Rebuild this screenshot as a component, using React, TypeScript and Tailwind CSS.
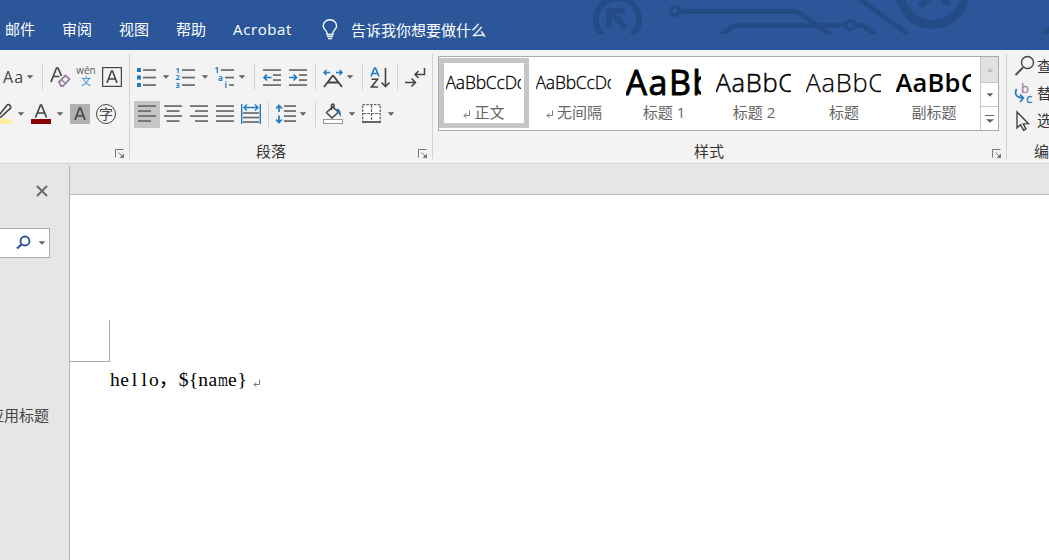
import React from 'react';
import clsx from 'clsx';

const INK = '#444444';
const LINE = '#6a6a6a';
const BLUE = '#1e7bc4';

interface IconProps {
  className?: string;
  children: React.ReactNode;
  w?: number;
  h?: number;
}

// All ribbon icons share a 20px high box
const Icon = ({ className, children, w = 20, h = 20 }: IconProps) => (
  <svg width={w} height={h} viewBox={`0 0 ${w} ${h}`} fill="none" className={clsx('shrink-0 overflow-visible', className)}>
    {children}
  </svg>
);

const Caret = ({ className }: { className?: string }) => (
  <Icon w={6} h={4} className={className}>
    <path d="M-0.300 0.200h6.600L3 3.700z" fill="#606060" />
  </Icon>
);

const Separator = ({ className }: { className?: string }) => (
  <div className={clsx('h-[26px] w-px shrink-0 bg-[#d2d2d2]', className)} />
);

const GroupDivider = () => <div className="mt-1 h-[105px] w-px shrink-0 bg-[#d2d2d2]" />;

const Launcher = ({ className }: { className?: string }) => (
  <Icon w={10} h={10} className={className}>
    <path d="M0.500 8.500v-8h8" stroke="#777777" />
    <path d="M3.500 3.500l4 4" stroke="#777777" />
    <path d="M9 4.500V9H4.500z" fill="#777777" />
  </Icon>
);

const Lines = ({ rows }: { rows: number[][] }) => (
  <>
    {rows.map(([x, y, w]) => (
      <rect key={`${x}-${y}`} x={x} y={y - 0.8} width={w} height={1.7} fill={LINE} />
    ))}
  </>
);

const tabs = ['邮件', '审阅', '视图', '帮助', 'Acrobat'];

const TitleBar = () => (
  <header className="relative h-[50px] bg-[#2b579a] text-[15px] text-white">
    <svg className="absolute top-0 left-[580px]" width="469" height="34" viewBox="0 0 469 34" fill="none" stroke="#254b86">
      <circle cx="37.500" cy="19.500" r="21.500" strokeWidth="6" />
      <path d="M45 10.500H29V28M29 10.500L46 28" strokeWidth="5.500" />
      <circle cx="95" cy="11" r="4.300" strokeWidth="3.800" />
      <path d="M101 11.500H214Q218 11.500 222 14.500L250 35" strokeWidth="5" />
      <path d="M141 35L149 29Q153 25.300 159 25.300H264M276 25.300Q282 25 287 28.500L296 35" strokeWidth="5" />
      <circle cx="270" cy="25" r="4.300" strokeWidth="3.800" />
      <path d="M277 -3L329 35" strokeWidth="5" />
      <circle cx="352.500" cy="-8" r="32.500" strokeWidth="9" />
      <path d="M359 -12L340 6" strokeWidth="7" />
      <path d="M362 0h8.500v5.500H362z" fill="#254b86" stroke="none" />
      <path d="M463 35L471 28" strokeWidth="5" />
    </svg>
    <nav className="relative flex h-full items-center pt-[9px] pl-[5px] whitespace-nowrap">
      <div className="flex w-[290px] gap-[27px]">
        {tabs.map((tab) => (
          <span key={tab} className={tab === 'Acrobat' ? 'tracking-[0.600px]' : undefined}>{tab}</span>
        ))}
      </div>
      <Icon w={16} h={21} className="ml-[27px]">
        <path d="M5 15.500V14C5 11.500 1.200 10.500 1.200 7a6.700 6.300 0 0 1 13.400 0c0 3.500-3.700 4.500-3.700 7v1.500z" stroke="#fff" strokeWidth="1.400" />
        <path d="M5 17.500h6M6 19.700h4" stroke="#fff" strokeWidth="1.300" />
      </Icon>
      <span className="mt-px ml-[13px]">告诉我你想要做什么</span>
    </nav>
  </header>
);

const FontGroup = () => (
  <div className="flex w-[129px] shrink-0 flex-col overflow-hidden">
    <div className="mt-[12px] flex h-[30px] items-center">
      <span className="ml-[3px] w-[22px] font-['Open_Sans'] text-[16px] leading-none tracking-[1.200px] text-[#444444]">Aa</span>
      <Caret className="ml-[2px]" />
      <Separator className="ml-[9px]" />
      <Icon className="ml-[7px]">
        <path d="M1 15L6.500 1h1.500l3.500 8M3.500 9.500h6" stroke={INK} strokeWidth="1.700" />
        <path d="M9 15l6.500-6.500 4 3.500-6.500 7h-2z" stroke="#9b7fa3" strokeWidth="1.800" />
        <path d="M11 12.500l4.500 4" stroke="#9b7fa3" strokeWidth="1.500" />
      </Icon>
      <div className="ml-[7px] flex w-[18px] flex-col items-center">
        <span className="-mt-[2px] font-['Open_Sans'] text-[10px] leading-[10px] text-[#555555]">wén</span>
        <span className="text-[10px] leading-[12px] text-[#2b88d8]">文</span>
      </div>
      <Icon className="ml-[7px]">
        <rect x="0.600" y="0.600" width="18.800" height="18.800" stroke={INK} strokeWidth="1.200" />
        <path d="M5 16L9.500 4h1L15 16M6.500 12h7" stroke={INK} strokeWidth="1.600" />
      </Icon>
    </div>
    <div className="mt-[7px] flex h-[30px] items-center">
      <Icon w={12}>
        <path d="M-2 12.500L6 2.500Q8-1 10 1.500T8.500 6L1 13l-4 1" stroke={INK} strokeWidth="1.600" />
        <rect x="-6" y="15" width="18" height="5" fill="#ffef9c" />
      </Icon>
      <Caret className="ml-[6px]" />
      <Icon className="ml-[7px]">
        <path d="M4.500 13.500L9.500 1h1L15.500 13.500M6.500 9h7" stroke={INK} strokeWidth="1.700" />
        <rect y="15" width="20" height="5" fill="#8b0000" />
      </Icon>
      <Caret className="ml-[6px]" />
      <Icon className="ml-[7px]">
        <rect width="20" height="20" fill="#b1b1b1" />
        <path d="M5 16L9.500 4h1L15 16M6.500 12h7" stroke={INK} strokeWidth="1.700" />
      </Icon>
      <div className="ml-[6px] flex size-[20px] items-center justify-center rounded-full border-[1.500px] border-[#444444] text-[14px] leading-none text-[#444444]">字</div>
    </div>
    <Launcher className="mt-[20px] ml-[115px]" />
  </div>
);

const IndentIcon = ({ className, arrow }: { className?: string; arrow: string }) => (
  <Icon className={className} w={18}>
    <Lines rows={[[0, 3, 18], [10, 8, 8], [10, 13, 8], [0, 18, 18]]} />
    <path d={arrow} stroke={BLUE} strokeWidth="1.700" />
  </Icon>
);

const alignments = [
  [[0, 2, 18], [0, 7, 13], [0, 12, 18], [0, 17, 13]],
  [[0, 2, 18], [2.5, 7, 13], [0, 12, 18], [2.5, 17, 13]],
  [[0, 2, 18], [5, 7, 13], [0, 12, 18], [5, 17, 13]],
  [[0, 2, 18], [0, 7, 18], [0, 12, 18], [0, 17, 18]],
];

const ParagraphGroup = () => (
  <div className="flex w-[302px] shrink-0 flex-col">
    <div className="mt-[12px] flex h-[30px] items-center">
      <Icon className="ml-[7px]">
        {[1, 8.5, 16].map((y) => (
          <rect key={y} x="0" y={y} width="4" height="4" fill={BLUE} />
        ))}
        <Lines rows={[[6, 3, 13], [6, 10.5, 13], [6, 18, 13]]} />
      </Icon>
      <Caret className="ml-[6px]" />
      <Icon className="ml-[7px]">
        <g fill={BLUE} fontFamily="Open Sans" fontWeight="700" fontSize="7.500">
          <text x="-0.500" y="5.500">1</text>
          <text x="-0.500" y="13">2</text>
          <text x="-0.500" y="20.700">3</text>
        </g>
        <Lines rows={[[6, 3, 13], [6, 10.5, 13], [6, 18, 13]]} />
      </Icon>
      <Caret className="ml-[6px]" />
      <Icon className="ml-[7px]">
        <g fill={BLUE} fontFamily="Open Sans" fontWeight="700" fontSize="8">
          <text x="-0.500" y="5.500">1</text>
          <text x="3" y="13.500">a</text>
          <text x="9.500" y="21">i</text>
        </g>
        <Lines rows={[[6, 3, 13], [10, 10.5, 9], [14, 18, 5]]} />
      </Icon>
      <Caret className="ml-[4px]" />
      <Separator className="ml-[9px]" />
      <IndentIcon className="ml-[8px]" arrow="M8.500 10.500H1M4 7.500l-3 3 3 3" />
      <IndentIcon className="ml-[8px]" arrow="M0 10.500h7.500M4.500 7.500l3 3-3 3" />
      <Separator className="ml-[8px]" />
      <Icon className="ml-[7px]">
        <path d="M7 5.500H1M3.500 3L1 5.500 3.500 8M13 5.500h6M16.500 3L19 5.500 16.500 8" stroke={BLUE} strokeWidth="1.500" />
        <path d="M1 20l8.500-11h1L19 20M5 15.500h10" stroke={INK} strokeWidth="1.800" />
      </Icon>
      <Caret className="ml-[4px]" />
      <Separator className="ml-[9px]" />
      <Icon className="ml-[7px]">
        <path d="M1 9.500L4.500 1h1L9 9.500M2.500 6.500h5" stroke={BLUE} strokeWidth="1.600" />
        <path d="M1.500 12.300h6L1.500 20h6.500" stroke={INK} strokeWidth="1.600" />
        <path d="M15.500 1v18.500M11.500 15.500l4 4 4-4" stroke={INK} strokeWidth="1.600" />
      </Icon>
      <Separator className="ml-[7px]" />
      <Icon className="ml-[7px]">
        <path d="M19.500 1v6.500H10M13.500 4L10 7.500l3.500 3.500M0 15.500h10M6.500 11.500l4 4-4 4" stroke={INK} strokeWidth="1.500" />
      </Icon>
    </div>
    <div className="mt-[7px] flex h-[30px] items-center">
      <div className="ml-1 flex items-center">
        {alignments.map((rows, i) => (
          <div key={i} className={clsx('flex h-[27px] w-[26px] items-center justify-center', i === 0 && 'bg-[#c5c5c5]')}>
            <Icon w={18}>
              <Lines rows={rows} />
            </Icon>
          </div>
        ))}
      </div>
      <Icon className="ml-[3px]">
        <path d="M0.700 0v20M19.300 0v20M3 3.500h14M6 0.500l-3 3 3 3M14 0.500l3 3-3 3" stroke={BLUE} strokeWidth="1.400" />
        <Lines rows={[[2, 9, 16], [2, 13.5, 16], [2, 18, 16]]} />
      </Icon>
      <Separator className="ml-[7px]" />
      <Icon className="ml-[6px]" w={21}>
        <path d="M4 2v6M1 4.500l3-3 3 3M4 11.500v7M1 15.500l3 3 3-3" stroke={BLUE} strokeWidth="1.700" />
        <Lines rows={[[9, 2, 12], [9, 7, 12], [9, 12, 12], [9, 17, 12]]} />
      </Icon>
      <Caret className="ml-[4px]" />
      <Separator className="ml-[9px]" />
      <Icon className="ml-[7px]">
        <path d="M3.500 8.500l6-5.500 6 5-6.500 6zM8.500 6V1q2-2 2.500 0v3.500" stroke={INK} strokeWidth="1.500" />
        <path d="M13.500 4.500q5 0 4.500 8.500-2-2-2.500-4z" fill={BLUE} />
        <rect x="0.500" y="15.500" width="19" height="4" fill="#fff" stroke="#999999" />
      </Icon>
      <Caret className="ml-[6px]" />
      <Icon className="ml-[7px]" w={19}>
        <rect x="0.700" y="0.700" width="17.500" height="17.500" fill="#fff" stroke="#666666" strokeWidth="1.300" strokeDasharray="2.500 1.200" />
        <path d="M9.500 1v17M1 9.500h17" stroke="#666666" strokeWidth="1.200" strokeDasharray="3 1" />
        <path d="M0 18h19" stroke="#666666" strokeWidth="2" />
      </Icon>
      <Caret className="ml-[7px]" />
    </div>
    <div className="mt-[11px] flex items-center">
      <span className="ml-[126px] w-[30px] text-[15px] leading-[22px] text-[#333333]">段落</span>
      <Launcher className="mt-[6px] ml-[132px]" />
    </div>
  </div>
);

interface StyleItem {
  sample: string;
  label: string;
  mark?: boolean;
  sampleClass: string;
}

const styleItems: StyleItem[] = [
  { sample: 'AaBbCcDd', label: '正文', mark: true, sampleClass: 'text-[17.500px] font-light tracking-[-0.200px] [-webkit-text-stroke:0.300px_#000]' },
  { sample: 'AaBbCcDd', label: '无间隔', mark: true, sampleClass: 'text-[17.500px] font-light tracking-[-0.200px] [-webkit-text-stroke:0.300px_#000]' },
  { sample: 'AaBb', label: '标题 1', sampleClass: 'text-[34px] font-normal tracking-[1.500px] [-webkit-text-stroke:0.900px_#000]' },
  { sample: 'AaBbC', label: '标题 2', sampleClass: 'text-[25.500px] font-light tracking-[0.700px] [-webkit-text-stroke:0.500px_#000]' },
  { sample: 'AaBbC', label: '标题', sampleClass: 'text-[25.500px] font-light tracking-[0.700px] [-webkit-text-stroke:0.250px_#000]' },
  { sample: 'AaBbC', label: '副标题', sampleClass: 'text-[25.500px] font-semibold tracking-[0.200px]' },
];

const ReturnMark = ({ className }: { className?: string }) => (
  <Icon w={7} h={8} className={className}>
    <path d="M6.500 0.500v5H1M3.500 3L1 5.500 3.500 8" stroke="#777777" />
  </Icon>
);

const StylesGroup = () => (
  <div className="flex w-[573px] shrink-0 flex-col">
    <div className="mt-[6px] ml-[5px] flex h-[75px] w-[561px] border border-[#ababab] bg-white">
      {styleItems.map((item, i) => (
        <div
          key={item.label}
          className={clsx('mt-px flex h-[70px] w-[90px] shrink-0 flex-col items-center border-[5px]', i === 0 ? 'border-[#c6c6c6]' : 'border-transparent')}
        >
          <div className={clsx("mr-[2px] h-[38px] w-[75px] overflow-hidden font-['Open_Sans'] leading-[38px] whitespace-nowrap text-black", item.sampleClass)}>
            {item.sample}
          </div>
          <div className="flex items-center gap-[4px] text-[15px] leading-[22px] whitespace-nowrap text-[#666666]">
            {item.mark && <ReturnMark className="mt-[4px]" />}
            <span>{item.label}</span>
          </div>
        </div>
      ))}
      <div className="ml-px flex w-[18px] flex-col border-l border-[#c6c6c6]">
        <div className="flex h-[25px] items-center justify-center bg-[#e1e1e1]">
          <Caret className="rotate-180 opacity-30" />
        </div>
        <div className="flex h-[25px] items-center justify-center border-y border-[#c6c6c6]">
          <Caret />
        </div>
        <div className="flex flex-1 flex-col items-center justify-center gap-[3px]">
          <div className="h-px w-[9px] bg-[#666666]" />
          <Caret className="scale-x-125" />
        </div>
      </div>
    </div>
    <div className="mt-[9px] flex items-center">
      <span className="ml-[261px] w-[30px] text-[15px] leading-[22px] text-[#333333]">样式</span>
      <Launcher className="mt-[6px] ml-[268px]" />
    </div>
  </div>
);

const EditGroup = () => (
  <div className="flex w-[42px] shrink-0 flex-col overflow-hidden text-[15px] leading-[27px] whitespace-nowrap text-[#333333]">
    <div className="mt-[3px] flex h-[27px] items-center gap-[2px] pl-[8px]">
      <Icon className="-mt-[2px]">
        <circle cx="12.500" cy="6.500" r="6" stroke={INK} strokeWidth="1.400" />
        <path d="M8 11.500L0.500 19" stroke={INK} strokeWidth="1.800" />
      </Icon>
      <span>查找</span>
    </div>
    <div className="flex h-[27px] items-center gap-[3px] pl-[7px]">
      <Icon>
        <g fontFamily="Open Sans" fontSize="13" strokeWidth="0.300">
          <text x="7" y="9" fill="#a77db0" stroke="#a77db0">b</text>
          <text x="12" y="19" fill={BLUE} stroke={BLUE}>c</text>
        </g>
        <path d="M2.500 5q-3.500 8 6.500 9M6 10.500l3.500 3.500L6 18" stroke={BLUE} strokeWidth="1.700" />
      </Icon>
      <span>替换</span>
    </div>
    <div className="flex h-[27px] items-center gap-[7px] pl-[9px]">
      <Icon w={14}>
        <path d="M1 1v16l3.500-3.300 3 5.500 2.500-1.300-2.800-5 5.300-.2z" stroke={INK} strokeWidth="1.400" />
      </Icon>
      <span>选择</span>
    </div>
    <span className="mt-[4px] pl-[27px]">编辑</span>
  </div>
);

const NavPane = () => (
  <aside className="flex w-[69px] shrink-0 flex-col overflow-hidden">
    <Icon w={12} h={12} className="mt-[21px] ml-[36px]">
      <path d="M1 1l10 10M11 1L1 11" stroke="#6a6a6a" strokeWidth="2" />
    </Icon>
    <div className="mt-[31px] flex h-[30px] w-[50px] items-center border border-l-0 border-[#ababab] bg-white">
      <Icon w={14} h={13} className="-mt-px ml-[16px]">
        <circle cx="9" cy="5" r="4.500" stroke="#2b579a" strokeWidth="1.900" />
        <path d="M6 8l-5 4.500" stroke="#2b579a" strokeWidth="2.300" />
      </Icon>
      <Caret className="ml-[9px]" />
    </div>
    <div className="mt-[146px] flex w-[49px] justify-end text-[15px] leading-[22px] whitespace-nowrap text-[#444444]">应用标题</div>
  </aside>
);

// Body text sits on a half-width grid, the comma takes two cells
const bodyText = 'hello，${name}';

const DocumentArea = () => (
  <main className="mt-[2px] flex flex-1 flex-col border-l border-[#b4b4b4]">
    <div className="h-[29px] border-b border-[#c0c0c0]" />
    <div className="flex-1 bg-white">
      <div className="mt-[125px] h-[42px] w-[40px] border-r border-b border-[#ababab]" />
      <div className="mt-[5px] ml-[40px] flex h-[26px] items-center">
        <p className="flex font-['Liberation_Serif','Noto_Sans_CJK_SC',serif] text-[19.500px] leading-[26px] text-black">
          {bodyText.split('').map((ch, i) => (
            <span
              key={i}
              className={clsx('flex', ch === '，' ? 'w-[20px]' : 'w-[9.750px] justify-center', ch === 'm' && 'scale-x-[0.650]')}
            >
              {ch}
            </span>
          ))}
        </p>
        <ReturnMark className="mt-[5px] ml-[6px]" />
      </div>
    </div>
  </main>
);

const App: React.FC = () => {
  return (
    <div className="flex h-[560px] w-[1049px] flex-col overflow-hidden bg-[#e6e6e6] font-['Open_Sans','Noto_Sans_CJK_SC',sans-serif]">
      <TitleBar />
      <div className="flex h-[114px] shrink-0 border-b border-[#d2d2d2] bg-[#f3f3f3]">
        <FontGroup />
        <GroupDivider />
        <ParagraphGroup />
        <GroupDivider />
        <StylesGroup />
        <GroupDivider />
        <EditGroup />
      </div>
      <div className="flex min-h-0 flex-1">
        <NavPane />
        <DocumentArea />
      </div>
    </div>
  );
};

export default App;
